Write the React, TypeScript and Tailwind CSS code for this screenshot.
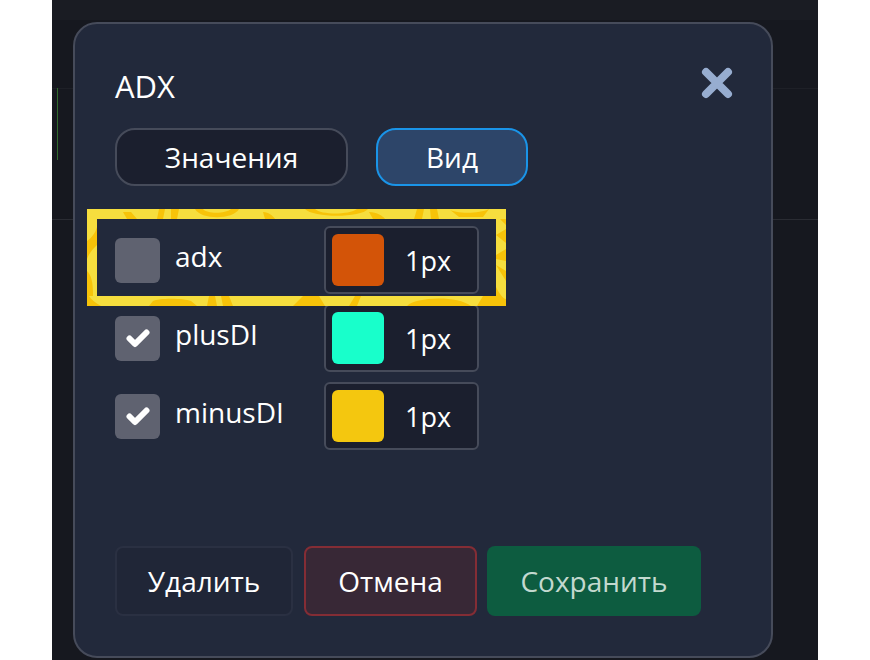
import React from 'react';

const rows = [
  { name: 'adx', color: 'bg-[#d35408]', checked: false },
  { name: 'plusDI', color: 'bg-[#18ffcb]', checked: true },
  { name: 'minusDI', color: 'bg-[#f4c70f]', checked: true },
];

const CheckMark = () => (
  <svg width="24" height="24" viewBox="0 0 24 24" fill="none">
    <path d="M3.5 12.5 L9 18 L20.5 6.5" stroke="#fff" strokeWidth="6" strokeLinecap="round" strokeLinejoin="round" />
  </svg>
);

const HighlightFrame = () => (
  <svg className="absolute left-[12px] top-[185px]" width="419" height="97" viewBox="0 0 419 97">
    <defs>
      <clipPath id="frame">
        <path clipRule="evenodd" d="M0 0H419V97H0Z M10 10V87H409V10Z" />
      </clipPath>
    </defs>
    <g clipPath="url(#frame)">
      <rect width="419" height="97" fill="#f6de3e" />
      <g fill="#f7c309">
        <path d="M36 3 L44 3 L50 10 L40 10 Z" />
        <path d="M72 0 H78 L76 10 H70 Z M84 0 H92 L90 10 H84 Z" />
        <path d="M108 0 H116 C120 5 138 5 144 0 H152 C146 11 114 11 108 0 Z" />
        <path d="M176 3 C182 3 186 7 188 10 H178 Z" />
        <path d="M228 0 C234 6 262 6 270 0 H281 C274 9 226 9 218 0 Z" />
        <path d="M282 3 C290 3 296 7 298 10 H286 Z" />
        <path d="M330 0 H337 L335 10 H327 Z M343 0 H350 L352 10 H344 Z" />
        <path d="M362 0 C368 5 392 5 402 0 L396 8 H372 Z" />
        <path d="M0 32 C6 28 9 22 10 18 V36 C6 40 2 44 0 50 Z" />
        <path d="M0 62 C4 66 6 72 6 87 H0 Z" />
        <path d="M2 87 C4 90 8 94 14 97 H0 V87 Z" />
        <path d="M66 92 C72 89 96 89 104 92 L110 97 H62 Z" />
        <path d="M122 87 H128 L130 97 H120 Z M134 87 H142 L146 97 H136 Z" />
        <path d="M206 97 L216 87 H232 L238 97 Z" />
        <path d="M268 87 H274 L270 97 H262 Z" />
        <path d="M320 97 C328 88 370 86 384 97 Z" />
        <path d="M396 87 H409 V97 H390 Z" />
        <path d="M409 26 L419 20 V34 Z M409 46 L419 40 V52 L409 50 Z M409 56 L419 62 V72 Z M413 10 H419 V16 Z" />
        <path d="M409 78 C412 84 416 90 419 90 V97 H409 Z" />
      </g>
    </g>
  </svg>
);

export default function App() {
  return (
    <div className="w-[870px] h-[660px] bg-white overflow-hidden font-['Open_Sans',sans-serif]">
      <div className="relative ml-[52px] w-[766px] h-[660px] bg-[#16181f] pl-[21px] pt-[22px]">
        <div className="absolute left-0 right-0 top-0 h-[20px] bg-[#1a1c23]" />
        <div className="absolute left-0 right-0 top-[219px] h-px bg-[#2a2c33]" />
        <div className="absolute left-0 right-0 top-[88px] h-px bg-[#1e2027]" />
        <div className="absolute left-[5px] top-[88px] w-px h-[72px] bg-[#2f6a2b]" />

        <div className="relative flex flex-col w-[700px] h-[636px] px-[40px] bg-[#22293b] border-2 border-[#464b5a] rounded-[24px] text-white">
          <div className="flex items-center justify-between h-[86px] pt-[39px] -mr-[3px]">
            <span className="text-[31px] leading-none">ADX</span>
            <svg className="mb-[8px]" width="34" height="34" viewBox="0 0 34 34" fill="none">
              <path d="M6 6 L28 28 M28 6 L6 28" stroke="#97add0" strokeWidth="8" strokeLinecap="round" />
            </svg>
          </div>

          <div className="flex gap-[28px] mt-[18px] text-[28px]">
            <div className="flex items-center justify-center w-[233px] h-[58px] bg-[#1b1f2e] border-2 border-[#464b5a] rounded-[20px]">Значения</div>
            <div className="flex items-center justify-center w-[152px] h-[58px] bg-[#2d4569] border-2 border-[#1a94e8] rounded-[20px]">Вид</div>
          </div>

          <div className="flex flex-col gap-[10px] mt-[40px]">
            {rows.map((r) => (
              <div key={r.name} className="flex items-center h-[68px]">
                <div className="flex items-center justify-center w-[45px] h-[45px] bg-[#5f6270] rounded-[6px]">
                  {r.checked && <CheckMark />}
                </div>
                <span className="ml-[15px] w-[149px] mb-[8px] text-[28px]">{r.name}</span>
                <div className="flex items-center w-[155px] h-[68px] pl-[6px] bg-[#1b1f2e] border-2 border-[#464b5a] rounded-[6px]">
                  <div className={`w-[52px] h-[52px] rounded-[6px] ${r.color}`} />
                  <span className="ml-[21px] mt-[2px] text-[27px]">1px</span>
                </div>
              </div>
            ))}
          </div>

          <div className="flex mt-[96px] text-[28px]">
            <div className="flex items-center justify-center w-[178px] h-[70px] bg-[#202637] border-2 border-[#2a3042] rounded-[8px]">Удалить</div>
            <div className="flex items-center justify-center w-[173px] h-[70px] ml-[11px] bg-[#382836] border-2 border-[#842d35] rounded-[8px]">Отмена</div>
            <div className="flex items-center justify-center w-[214px] h-[70px] ml-[10px] bg-[#0d5c40] rounded-[8px] text-[#c3d9cf]">Сохранить</div>
          </div>

          <HighlightFrame />
        </div>
      </div>
    </div>
  );
}
